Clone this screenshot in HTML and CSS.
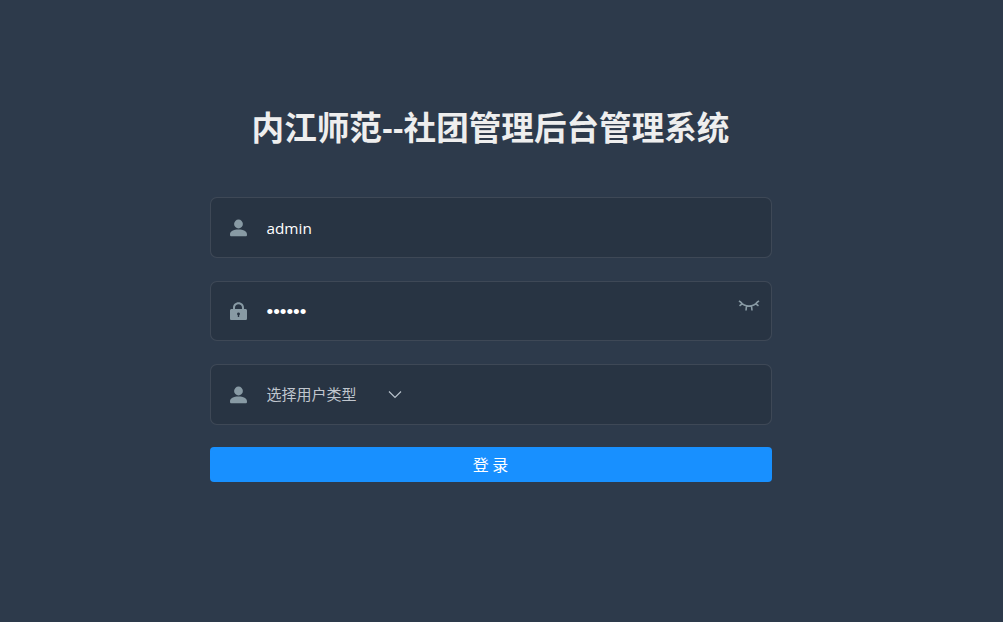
FILE: index.html
```html
<!DOCTYPE html>
<html lang="zh-CN">
<head>
<meta charset="utf-8">
<title>登录</title>
<link rel="stylesheet" href="styles.css">
</head>
<body>
<main class="login">
  <h1 class="title">内江师范--社团管理后台管理系统</h1>
  <form class="form">
    <div class="field">
      <svg class="icon" viewBox="0 0 18 18"><circle cx="9" cy="5" r="4.400"/><path d="M.5 15.500c0-3 3.500-4.900 8.500-4.900s8.500 1.900 8.500 4.900c0 1.500-.5 1.800-1.500 1.800H2c-1 0-1.500-.3-1.500-1.800z"/></svg>
      <span class="value">admin</span>
    </div>
    <div class="field field-short">
      <svg class="icon" viewBox="0 0 18 18"><path fill-rule="evenodd" d="M3.500 7V5.700C3.500 2.500 5.800.2 9 .2s5.500 2.300 5.500 5.500V7h1.400c1 0 1.600.6 1.600 1.600v7.800c0 1-.6 1.600-1.600 1.600H2.100c-1 0-1.600-.6-1.600-1.600V8.600C.5 7.600 1.100 7 2.100 7h1.400zm2 0h7V5.700c0-2.100-1.400-3.500-3.500-3.500S5.500 3.600 5.500 5.700V7zM9 10.400a1.500 1.500 0 0 0-.7 2.800V15h1.400v-1.800A1.500 1.500 0 0 0 9 10.400z"/></svg>
      <span class="value dots">••••••</span>
      <svg class="eye" viewBox="0 0 22 12"><path d="M2 1.500c2.500 3 5.500 4.600 9 4.600s6.500-1.600 9-4.600M1 .8l3 2.400M21 .8l-3 2.400M1.500 5.800L4.500 3.500M20.500 5.800L17.500 3.500M8 10.500l.5-4.500M14 10.500L13.500 6"/></svg>
    </div>
    <div class="field">
      <svg class="icon" viewBox="0 0 18 18"><circle cx="9" cy="5" r="4.400"/><path d="M.5 15.500c0-3 3.500-4.900 8.500-4.900s8.500 1.900 8.500 4.900c0 1.500-.5 1.800-1.500 1.800H2c-1 0-1.500-.3-1.500-1.800z"/></svg>
      <span class="placeholder">选择用户类型</span>
      <svg class="chevron" viewBox="0 0 14 9"><path d="M1 1.500l6 6 6-6"/></svg>
    </div>
    <button class="submit" type="button">登 录</button>
  </form>
</main>
</body>
</html>
```

FILE: styles.css
```css
* { box-sizing: border-box; }
html, body { margin: 0; height: 100%; }
body {
  background: #2d3a4b;
  font-family: "Liberation Sans", "Noto Sans CJK SC", sans-serif;
  overflow: hidden;
}
.login {
  display: flex;
  flex-direction: column;
  align-items: center;
  padding: 106px 22px 0 0;
}
.title {
  margin: 0 0 45px;
  color: #eee;
  font: 700 32.600px/46px "Liberation Sans", "Noto Sans CJK SC", sans-serif;
  text-align: center;
}
.form {
  width: 562px;
  display: flex;
  flex-direction: column;
  gap: 23px;
}
.field {
  height: 61px;
  display: flex;
  align-items: center;
  padding-left: 18.500px;
  background: rgba(0, 0, 0, .1);
  border: 1px solid rgba(255, 255, 255, .1);
  border-radius: 7px;
  position: relative;
}
.field-short { height: 60px; }
.icon {
  width: 19px;
  height: 18px;
  fill: #889aa4;
  flex: none;
}
.value {
  margin-left: 18.500px;
  color: #fff;
  font: 15.300px/20px "Open Sans", sans-serif;
}
.dots {
  font: 19px/20px "Liberation Sans", sans-serif;
  position: relative;
  top: 1px;
}
.placeholder {
  margin-left: 18.500px;
  color: #c0c6ce;
  font: 15px/20px "Noto Sans CJK SC", sans-serif;
  width: 90px;
  white-space: nowrap;
  position: relative;
  top: -1px;
}
.chevron {
  width: 14px;
  height: 9px;
  margin-left: 31px;
  fill: none;
  stroke: #b8c2cc;
  stroke-width: 1.200;
}
.eye {
  position: absolute;
  right: 11px;
  top: 18px;
  width: 22px;
  height: 12px;
  fill: none;
  stroke: #889aa4;
  stroke-width: 1.600;
}
.submit {
  height: 35px;
  margin-top: -1px;
  border: 0;
  border-radius: 4px;
  background: #1890ff;
  color: #fff;
  font: 16px/20px "Noto Sans CJK SC", sans-serif;
  padding: 0 0 2px;
}
```
